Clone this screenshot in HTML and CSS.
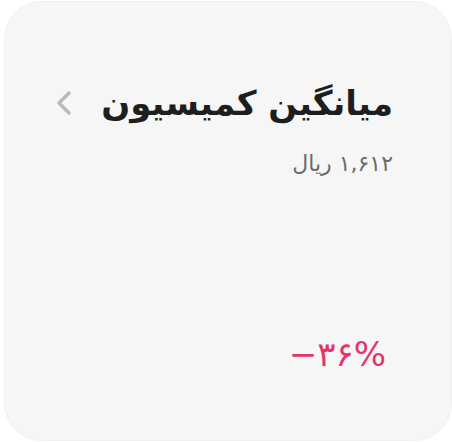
FILE: index.html
```html
<!DOCTYPE html>
<html lang="fa" dir="rtl">
<head>
<meta charset="utf-8">
<link rel="stylesheet" href="styles.css">
</head>
<body>
<div class="card">
  <div class="head">
    <h1 class="title">میانگین کمیسیون</h1>
    <svg class="chev" width="18" height="26" viewBox="0 0 18 26"><path d="M14 3 L4 13 L14 23" fill="none" stroke="#b9b9b9" stroke-width="3.5" stroke-linecap="round" stroke-linejoin="round"/></svg>
  </div>
  <div class="value">۱,۶۱۲ ریال</div>
  <div class="spacer"></div>
  <div class="pct" dir="ltr">−۳۶%</div>
</div>
</body>
</html>
```
FILE: styles.css
```css
html, body { margin: 0; padding: 0; background: #ffffff; }
body { font-family: "DejaVu Sans", sans-serif; }
.card {
  box-sizing: border-box;
  width: 448px;
  height: 440px;
  margin: 1px 0 0 0;
  background: #f6f6f6;
  border: 1px solid #f0f0f0;
  border-radius: 38px;
  padding: 78px 58px 66px 50px;
  display: flex;
  flex-direction: column;
}
.head {
  display: flex;
  align-items: center;
  justify-content: space-between;
}
.title {
  margin: 0;
  font-size: 34px;
  font-weight: bold;
  color: #1e1e1e;
  line-height: 46px;
}
.value {
  margin-top: 22px;
  font-size: 22px;
  color: #6b6b6b;
  line-height: 32px;
}
.spacer { flex: 1; }
.pct {
  align-self: flex-start;
  margin-right: 7px;
  font-size: 34px;
  color: #e5336a;
  line-height: 40px;
}
```
